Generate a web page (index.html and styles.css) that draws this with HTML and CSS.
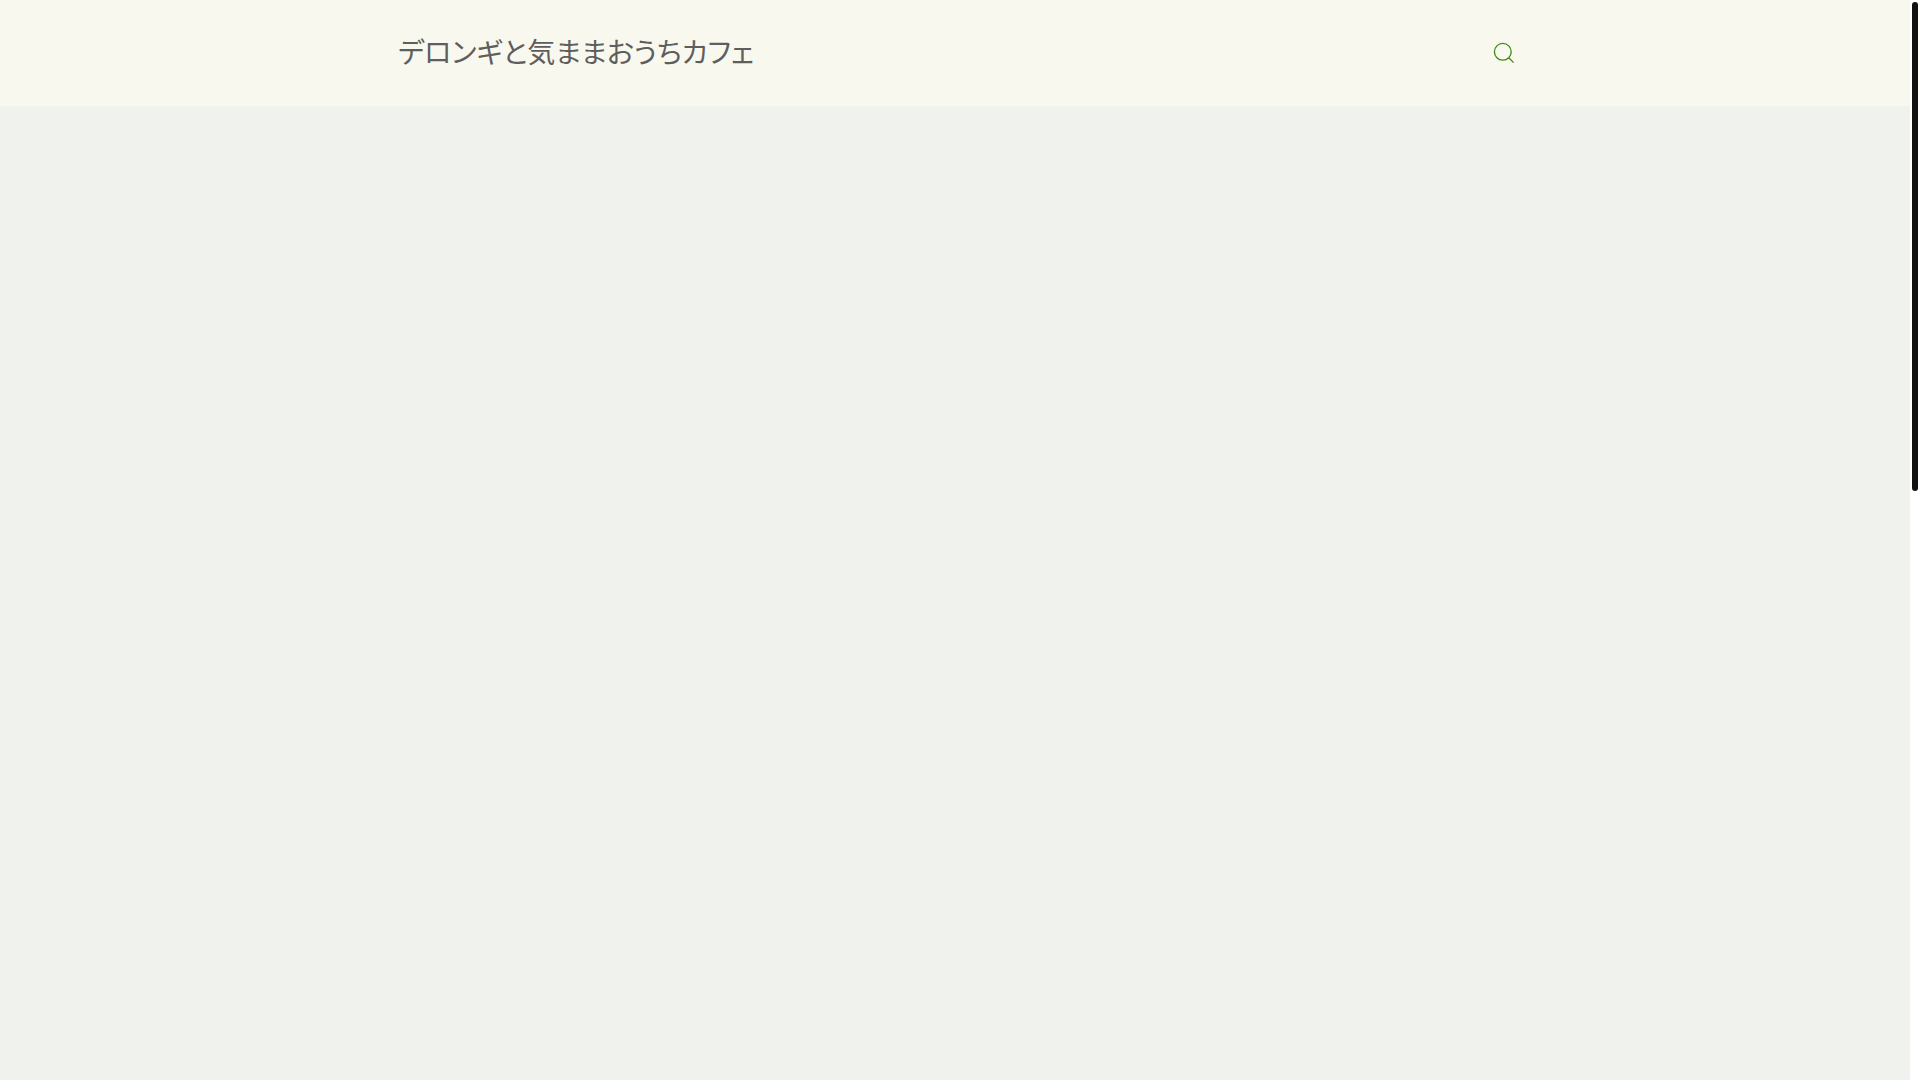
FILE: index.html
```html
<!DOCTYPE html>
<html lang="ja">
<head>
  <meta charset="UTF-8">
  <meta name="viewport" content="width=device-width, initial-scale=1.0">
  <title>デロンギと気ままおうちカフェ</title>
  <link rel="stylesheet" href="styles.css">
</head>
<body>
  <div class="page">
    <header class="header">
      <div class="container">
        <a class="logo" href="#">デロンギと気ままおうちカフェ</a>
        <button class="search-toggle" type="button" aria-label="検索">
          <svg width="24" height="24" viewBox="0 0 20 20">
            <circle fill="none" stroke="currentColor" stroke-width="1.1" cx="9" cy="9" r="7"></circle>
            <path fill="none" stroke="currentColor" stroke-width="1.1" d="M14,14 L18,18 L14,14 Z"></path>
          </svg>
        </button>
      </div>
    </header>
    <main class="main"></main>
  </div>
  <div class="scrollbar">
    <div class="scrollbar-thumb"></div>
  </div>
</body>
</html>
```

FILE: styles.css
```css
body {
  display: flex;
  min-height: 100vh;
  margin: 0;
  background: #fff;
  font-family: "Noto Sans CJK JP", sans-serif;
}

.page {
  flex: 1;
  display: flex;
  flex-direction: column;
  background: #f0f2ed;
}

.header {
  background: #f8f8ef;
}

.container {
  display: flex;
  justify-content: space-between;
  align-items: center;
  box-sizing: border-box;
  max-width: 1200px;
  min-height: 106px;
  margin: 0 auto;
  padding: 0 39px 0 43px;
}

.logo {
  padding-bottom: 5px;
  color: #5e5e5e;
  font-size: 28px;
  line-height: 40px;
  font-feature-settings: "palt";
  text-decoration: none;
}

.search-toggle {
  display: flex;
  padding: 0;
  border: none;
  background: none;
  color: #3d8b0f;
  cursor: pointer;
}

.main {
  flex: 1;
}

/* Scrollbar */
.scrollbar {
  box-sizing: border-box;
  width: 10px;
  height: 100vh;
  padding: 2px;
}

.scrollbar-thumb {
  height: 489px;
  border-radius: 3px;
  background: #111;
}
```
